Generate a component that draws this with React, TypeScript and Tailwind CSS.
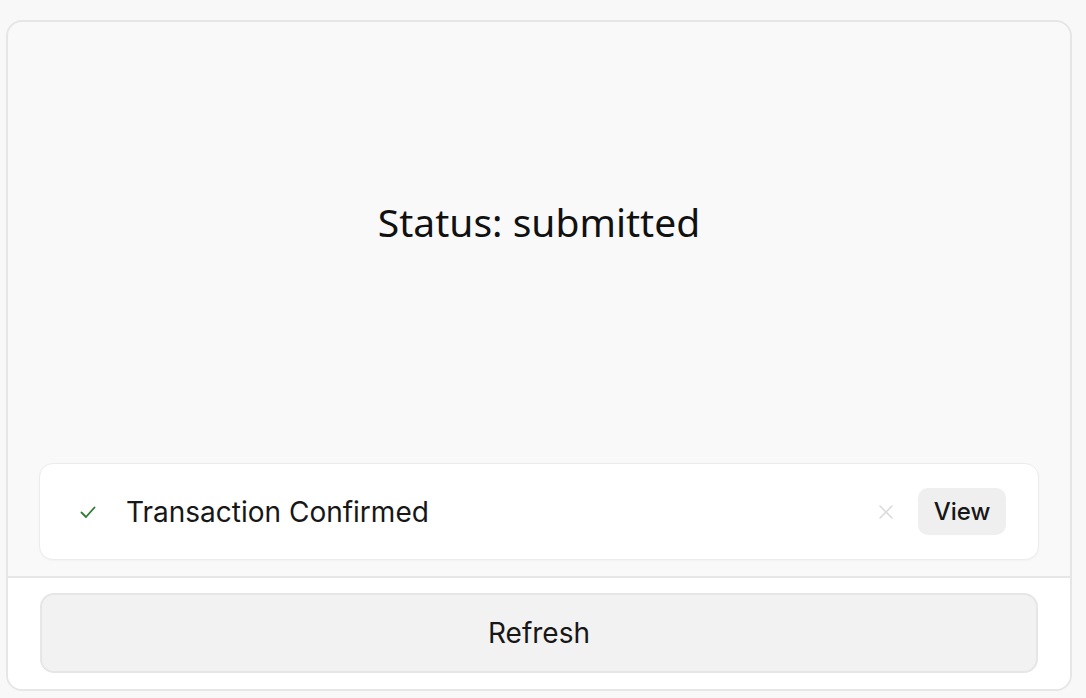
import React from 'react';
import { X } from 'lucide-react';

function Toast() {
  return (
    <div className="flex h-[97px] items-center rounded-[14px] border border-[#ececec] bg-white pl-[38px] pr-[32px] shadow-[0_1px_2px_rgba(0,0,0,0.03)]">
      <svg width="20" height="20" viewBox="0 0 20 20" className="mr-[28px] shrink-0 text-[#2e7d32]">
        <path d="M3.5 10.5 L8 15 L16.5 5.5" fill="none" stroke="currentColor" strokeWidth="1.8" strokeLinecap="round" strokeLinejoin="round" />
      </svg>
      <span className="flex-1 font-['Inter',sans-serif] text-[28px] text-[#171717]">Transaction Confirmed</span>
      <X size={24} strokeWidth={1.5} className="mr-[20px] text-[#d9d9d9]" />
      <button className="flex h-[47px] w-[88px] items-center justify-center rounded-[10px] bg-[#efefef] font-['Inter',sans-serif] text-[24px] font-medium text-[#171717]">
        View
      </button>
    </div>
  );
}

export default function App() {
  return (
    <div className="min-h-screen bg-[#f8f8f8] pt-[20px] pl-[6px]">
      <div className="flex h-[671px] w-[1066px] flex-col overflow-hidden rounded-[16px] border-2 border-[#e6e6e6] bg-[#f9f9f9]">
        <div className="flex flex-1 flex-col px-[31px] pb-[16px]">
          <div className="flex flex-1 items-start justify-center pt-[171px]">
            <h1 className="font-['Noto_Sans',sans-serif] text-[39px] text-[#111]">Status: submitted</h1>
          </div>
          <Toast />
        </div>
        <div className="border-t-2 border-[#e6e6e6] bg-white px-[32px] pt-[15px] pb-[16px]">
          <button className="flex h-[80px] w-full items-center justify-center rounded-[14px] border-2 border-[#e6e6e6] bg-[#f2f2f2] font-['Inter',sans-serif] text-[28px] text-[#171717]">
            Refresh
          </button>
        </div>
      </div>
    </div>
  );
}
